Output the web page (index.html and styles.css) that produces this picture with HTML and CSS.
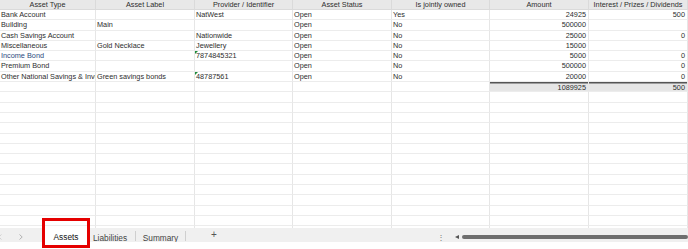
FILE: index.html
```html
<!DOCTYPE html>
<html lang="en">
<head>
    <meta charset="UTF-8">
    <title>Assets</title>
    <link rel="stylesheet" href="styles.css">
</head>
<body>
    <div class="sheet">
        <div class="row head">
            <div class="cell">Asset Type</div>
            <div class="cell">Asset Label</div>
            <div class="cell">Provider / Identifier</div>
            <div class="cell">Asset Status</div>
            <div class="cell">Is jointly owned</div>
            <div class="cell">Amount</div>
            <div class="cell">Interest / Prizes / Dividends</div>
        </div>
        <div class="row">
            <div class="cell">Bank Account</div>
            <div class="cell"></div>
            <div class="cell">NatWest</div>
            <div class="cell">Open</div>
            <div class="cell">Yes</div>
            <div class="cell num">24925</div>
            <div class="cell num">500</div>
        </div>
        <div class="row">
            <div class="cell">Building</div>
            <div class="cell">Main</div>
            <div class="cell"></div>
            <div class="cell">Open</div>
            <div class="cell">No</div>
            <div class="cell num">500000</div>
            <div class="cell num"></div>
        </div>
        <div class="row">
            <div class="cell">Cash Savings Account</div>
            <div class="cell"></div>
            <div class="cell">Nationwide</div>
            <div class="cell">Open</div>
            <div class="cell">No</div>
            <div class="cell num">25000</div>
            <div class="cell num">0</div>
        </div>
        <div class="row">
            <div class="cell">Miscellaneous</div>
            <div class="cell">Gold Necklace</div>
            <div class="cell">Jewellery</div>
            <div class="cell">Open</div>
            <div class="cell">No</div>
            <div class="cell num">15000</div>
            <div class="cell num"></div>
        </div>
        <div class="row">
            <div class="cell link">Income Bond</div>
            <div class="cell"></div>
            <div class="cell flag">7874845321</div>
            <div class="cell">Open</div>
            <div class="cell">No</div>
            <div class="cell num">5000</div>
            <div class="cell num">0</div>
        </div>
        <div class="row">
            <div class="cell">Premium Bond</div>
            <div class="cell"></div>
            <div class="cell"></div>
            <div class="cell">Open</div>
            <div class="cell">No</div>
            <div class="cell num">500000</div>
            <div class="cell num">0</div>
        </div>
        <div class="row">
            <div class="cell">Other National Savings &amp; Investments</div>
            <div class="cell">Green savings bonds</div>
            <div class="cell flag">48787561</div>
            <div class="cell">Open</div>
            <div class="cell">No</div>
            <div class="cell num">20000</div>
            <div class="cell num">0</div>
        </div>
        <div class="row">
            <div class="cell"></div>
            <div class="cell"></div>
            <div class="cell"></div>
            <div class="cell"></div>
            <div class="cell"></div>
            <div class="cell num total">1089925</div>
            <div class="cell num total">500</div>
        </div>
        <div class="row"><div class="cell"></div><div class="cell"></div><div class="cell"></div><div class="cell"></div><div class="cell"></div><div class="cell"></div><div class="cell"></div></div>
        <div class="row"><div class="cell"></div><div class="cell"></div><div class="cell"></div><div class="cell"></div><div class="cell"></div><div class="cell"></div><div class="cell"></div></div>
        <div class="row"><div class="cell"></div><div class="cell"></div><div class="cell"></div><div class="cell"></div><div class="cell"></div><div class="cell"></div><div class="cell"></div></div>
        <div class="row"><div class="cell"></div><div class="cell"></div><div class="cell"></div><div class="cell"></div><div class="cell"></div><div class="cell"></div><div class="cell"></div></div>
        <div class="row"><div class="cell"></div><div class="cell"></div><div class="cell"></div><div class="cell"></div><div class="cell"></div><div class="cell"></div><div class="cell"></div></div>
        <div class="row"><div class="cell"></div><div class="cell"></div><div class="cell"></div><div class="cell"></div><div class="cell"></div><div class="cell"></div><div class="cell"></div></div>
        <div class="row"><div class="cell"></div><div class="cell"></div><div class="cell"></div><div class="cell"></div><div class="cell"></div><div class="cell"></div><div class="cell"></div></div>
        <div class="row"><div class="cell"></div><div class="cell"></div><div class="cell"></div><div class="cell"></div><div class="cell"></div><div class="cell"></div><div class="cell"></div></div>
        <div class="row"><div class="cell"></div><div class="cell"></div><div class="cell"></div><div class="cell"></div><div class="cell"></div><div class="cell"></div><div class="cell"></div></div>
        <div class="row"><div class="cell"></div><div class="cell"></div><div class="cell"></div><div class="cell"></div><div class="cell"></div><div class="cell"></div><div class="cell"></div></div>
        <div class="row"><div class="cell"></div><div class="cell"></div><div class="cell"></div><div class="cell"></div><div class="cell"></div><div class="cell"></div><div class="cell"></div></div>
        <div class="row"><div class="cell"></div><div class="cell"></div><div class="cell"></div><div class="cell"></div><div class="cell"></div><div class="cell"></div><div class="cell"></div></div>
        <div class="row"><div class="cell"></div><div class="cell"></div><div class="cell"></div><div class="cell"></div><div class="cell"></div><div class="cell"></div><div class="cell"></div></div>
        <div class="row"><div class="cell"></div><div class="cell"></div><div class="cell"></div><div class="cell"></div><div class="cell"></div><div class="cell"></div><div class="cell"></div></div>
    </div>

    <div class="tabbar">
        <div class="nav">
            <svg class="chev chev-prev" viewBox="0 0 4 6"><polyline points="3.5,0.5 0.8,3 3.5,5.5"/></svg>
            <svg class="chev" viewBox="0 0 4 6"><polyline points="0.5,0.5 3.2,3 0.5,5.5"/></svg>
        </div>
        <div class="tab active">
            Assets
            <span class="highlight"></span>
        </div>
        <div class="tab tab-liabilities">Liabilities</div>
        <div class="sep"></div>
        <div class="tab tab-summary">Summary</div>
        <div class="sep"></div>
        <div class="add">+</div>
        <div class="scroll">
            <span class="more">⋮</span>
            <span class="arrow"></span>
            <span class="thumb"></span>
        </div>
    </div>
</body>
</html>
```

FILE: styles.css
```css
body {
    margin: 0;
    width: 688px;
    height: 249px;
    overflow: hidden;
    background: #fff;
    color: #2e2e2e;
    font-family: "Liberation Sans", Arial, sans-serif;
}

/* grid */

.sheet {
    height: 228px;
    overflow: hidden;
}

.row {
    display: grid;
    grid-template-columns: 96px 99px 98px 99px 98px 99px 99px;
    height: 10.3px;
}

.cell {
    position: relative;
    box-sizing: border-box;
    padding: 0 1px;
    font-size: 7.3px;
    line-height: 9.6px;
    white-space: nowrap;
    overflow: hidden;
    border-right: 1px solid #e6e6e6;
    border-bottom: 1px solid #ececec;
}

.head {
    height: 10px;
    background: #e8e8e8;
}

.head .cell {
    text-align: center;
    color: #2e2e2e;
    line-height: 9.4px;
    border-color: #dadada;
}

.num {
    text-align: right;
    padding-right: 2px;
}

.link {
    color: #2b4c7e;
}

.total {
    background: #e6e6e6;
    box-shadow: inset 0 1.5px 0 #555;
    line-height: 11px;
}

/* number stored as text marker */
.flag::before {
    content: '';
    position: absolute;
    top: 0;
    left: 0;
    border-top: 3px solid #1d8a3a;
    border-right: 3px solid transparent;
}

/* sheet tabs */

.tabbar {
    display: flex;
    align-items: flex-start;
    height: 14px;
    background: #f0f0f0;
    font-size: 8.3px;
    color: #444;
}

.nav {
    width: 42px;
    height: 14px;
    display: flex;
    align-items: center;
}

.chev {
    width: 4px;
    height: 6px;
    fill: none;
    stroke: #9a9a9a;
    stroke-width: 0.7;
    margin-top: 4px;
}

.chev-prev {
    margin-left: -2px;
    margin-right: 17px;
    stroke: #c4c4c4;
}

.tab {
    box-sizing: border-box;
    height: 14px;
    line-height: 14px;
    padding-top: 2.5px;
    overflow: hidden;
    white-space: nowrap;
}

.tab.active {
    position: relative;
    width: 48px;
    overflow: visible;
    text-align: center;
    background: #fff;
    color: #111;
    padding-top: 1.5px;
}

.highlight {
    position: absolute;
    left: 0;
    right: 0;
    top: -10px;
    bottom: -6px;
    border: 3px solid #e50000;
}

.tab-liabilities {
    width: 45px;
    padding-left: 3px;
}

.tab-summary {
    width: 49px;
    text-align: center;
}

.sep {
    width: 1px;
    height: 10px;
    margin-top: 3px;
    background: #cfcfcf;
}

.add {
    width: 56px;
    text-align: center;
    font-size: 10px;
    line-height: 14px;
    color: #555;
}

.scroll {
    margin-left: auto;
    display: flex;
    align-items: center;
    height: 14px;
    padding-top: 4px;
    box-sizing: border-box;
}

.more {
    font-size: 8px;
    color: #777;
    margin-right: 10px;
}

.arrow {
    width: 0;
    height: 0;
    border-top: 2.5px solid transparent;
    border-bottom: 2.5px solid transparent;
    border-right: 4px solid #555;
    margin-right: 3px;
}

.thumb {
    width: 226px;
    height: 4px;
    border-radius: 2px;
    background: #6e6e6e;
}
```
